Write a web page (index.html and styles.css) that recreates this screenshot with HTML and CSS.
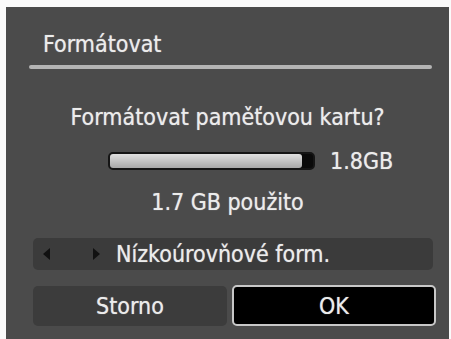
FILE: index.html
```html
<!DOCTYPE html>
<html>
<head>
<meta charset="utf-8">
<link rel="stylesheet" href="styles.css">
</head>
<body>
<div class="panel">
  <div class="title">Formátovat</div>
  <div class="rule"></div>
  <div class="question">Formátovat paměťovou kartu?</div>
  <div class="capacity">
    <div class="bar"><div class="fill"></div></div>
    <span class="size">1.8GB</span>
  </div>
  <div class="used">1.7 GB použito</div>
  <div class="option">
    <span class="arrows"><span class="arr left"></span><span class="arr right"></span></span>
    <span class="opt-text">Nízkoúrovňové form.</span>
  </div>
  <div class="buttons">
    <div class="btn cancel">Storno</div>
    <div class="btn ok">OK</div>
  </div>
</div>
</body>
</html>
```
FILE: styles.css
```css
html, body {
  margin: 0;
  padding: 0;
  background: #fafafa;
  width: 451px;
  height: 339px;
  overflow: hidden;
}
.panel {
  margin: 7px 2px 0 6px;
  height: 332px;
  background: #4b4b4b;
  display: flex;
  flex-direction: column;
  font-family: "DejaVu Sans Condensed", "DejaVu Sans", sans-serif;
  font-stretch: condensed;
  color: #ececec;
  font-size: 23px;
  text-shadow: 0 0 1px rgba(255,255,255,0.6);
}
.title {
  margin: 22px 0 0 37px;
  line-height: 30px;
}
.rule {
  margin: 6px 17px 0 23px;
  height: 4px;
  border-radius: 2px;
  background: #b4b4b4;
}
.question {
  margin-top: 35px;
  text-align: center;
  line-height: 26px;
}
.capacity {
  margin-top: 19px;
  display: flex;
  align-items: center;
  padding-left: 102px;
  height: 24px;
}
.bar {
  width: 207px;
  height: 18px;
  box-sizing: border-box;
  border: 2px solid #151515;
  border-radius: 5px;
  background: #0a0a0a;
  display: flex;
}
.fill {
  width: 192px;
  border-radius: 3px;
  background: linear-gradient(#e0e0e0, #c4c4c4 50%, #a8a8a8);
}
.size {
  margin-left: 15px;
}
.used {
  margin-top: 16px;
  text-align: center;
  line-height: 26px;
}
.option {
  margin: 23px 16px 0 27px;
  height: 32px;
  border-radius: 5px;
  background: #3b3b3b;
  display: flex;
  align-items: center;
}
.arrows {
  display: flex;
  align-items: center;
  margin-left: 10px;
  width: 73px;
}
.arr {
  width: 0;
  height: 0;
  border-top: 6px solid transparent;
  border-bottom: 6px solid transparent;
}
.arr.left {
  border-right: 7px solid #111;
}
.arr.right {
  margin-left: 43px;
  border-left: 7px solid #111;
}
.opt-text {
  margin-left: 0;
}
.buttons {
  margin: 16px 13px 0 27px;
  display: flex;
  gap: 5px;
  height: 40px;
}
.btn {
  display: flex;
  align-items: center;
  justify-content: center;
  border-radius: 5px;
  box-sizing: border-box;
}
.cancel {
  width: 194px;
  background: #3c3c3c;
}
.ok {
  flex: 1;
  background: #000;
  border: 2px solid #c8c8c8;
  margin-top: -1px;
}
```
